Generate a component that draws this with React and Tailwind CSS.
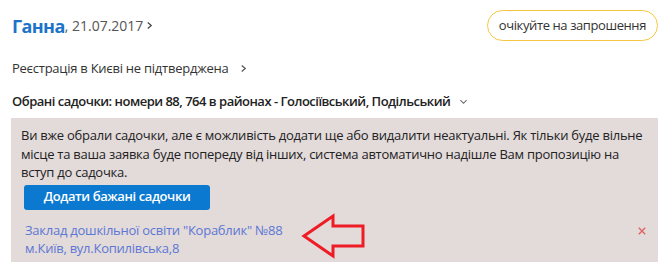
import React from "react";

const Chevron = ({ className = "" }) => (
  <svg viewBox="0 0 8 10" className={className} fill="none" stroke="currentColor" strokeWidth="1.4">
    <path d="M2 1.5 L6 5 L2 8.5" />
  </svg>
);

const ChevronDown = ({ className = "" }) => (
  <svg viewBox="0 0 10 8" className={className} fill="none" stroke="currentColor" strokeWidth="1.2">
    <path d="M1.5 2.5 L5 6 L8.5 2.5" />
  </svg>
);

export default function App() {
  return (
    <div className="relative w-[666px] h-[262px] overflow-hidden bg-white pl-[11px] pr-[8px] text-[#333] font-['Open_Sans',sans-serif]">
      {/* Header */}
      <div className="flex items-center justify-between pt-[10px]">
        <div className="flex items-center pl-px">
          <span className="text-[18px] font-bold text-[#1b74c8] leading-none tracking-[-0.6px]">Ганна</span>
          <span className="text-[14px] text-[#555]">, 21.07.2017</span>
          <Chevron className="w-[7px] h-[9px] ml-[3px] text-[#444]" />
        </div>
        <div className="h-[31px] px-[11px] rounded-full border border-[#f6c744] flex items-center text-[13px] tracking-[-0.4px] text-[#333]">
          очікуйте на запрошення
        </div>
      </div>

      <div className="flex items-center mt-[18px] pl-px text-[13px] leading-[18px] tracking-[-0.25px]">
        <span>Реєстрація в Києві не підтверджена</span>
        <Chevron className="w-[7px] h-[9px] ml-[12px] text-[#555]" />
      </div>

      <div className="flex items-center mt-[15px] pl-px text-[13px] leading-[18px] font-semibold tracking-[-0.5px] text-[#222]">
        <span>Обрані садочки: номери 88, 764 в районах - Голосіївський, Подільський</span>
        <ChevronDown className="w-[9px] h-[7px] ml-[9px] text-[#666]" />
      </div>

      {/* Info box */}
      <div className="mt-[8px] bg-[#e3dada] pl-[10px] pr-[10px] pt-[8px] pb-[20px]">
        <p className="text-[13px] leading-[18.5px] tracking-[-0.25px] text-[#222]">
          Ви вже обрали садочки, але є можливість додати ще або видалити неактуальні. Як тільки буде вільне місце та ваша заявка буде попереду від інших, система автоматично надішле Вам пропозицію на вступ до садочка.
        </p>
        <button className="mt-[3px] ml-[3px] w-[186px] h-[25px] rounded-[3px] bg-[#0b79d0] text-white text-[13px] font-semibold tracking-[-0.4px] flex items-center justify-center">
          Додати бажані садочки
        </button>
        <div className="flex items-start justify-between mt-[11px]">
          <div className="pl-[4px] text-[13px] leading-[18px] tracking-[-0.25px] text-[#5b78d4]">
            <div>Заклад дошкільної освіти "Кораблик" №88</div>
            <div>м.Київ, вул.Копилівська,8</div>
          </div>
          <svg viewBox="0 0 10 10" className="w-[8px] h-[8px] mt-[6px] mr-[2px]" stroke="#e06262" strokeWidth="1.7">
            <path d="M1 1 L9 9 M9 1 L1 9" />
          </svg>
        </div>
      </div>

      {/* Annotation arrow */}
      <svg className="absolute left-0 top-0 pointer-events-none" width="666" height="262">
        <polygon
          points="304,236 333,216 333,226 363,226 363,246 333,246 333,256"
          fill="none"
          stroke="#ee1c25"
          strokeWidth="3"
          strokeLinejoin="miter"
        />
      </svg>
    </div>
  );
}
